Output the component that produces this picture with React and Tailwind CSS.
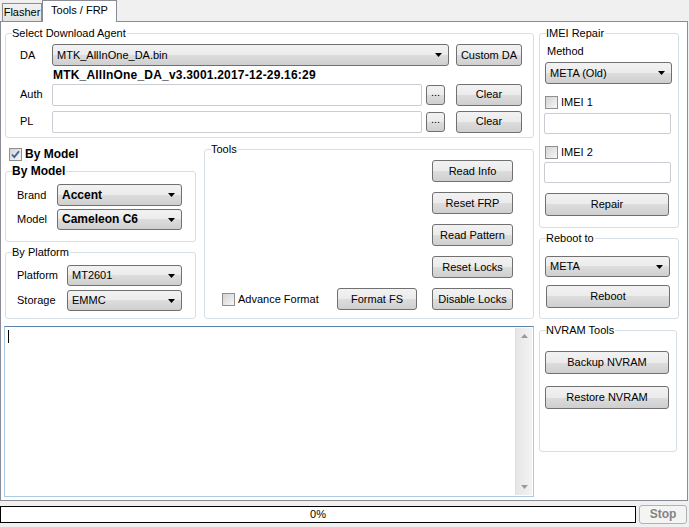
import React from 'react';

const btnFace =
  'border border-[#707070] rounded-[3px] bg-[linear-gradient(#f2f2f2,#ebebeb_50%,#dddddd_50%,#cfcfcf)]';

function Caret() {
  return (
    <svg width="7" height="4" viewBox="0 0 7 4" className="shrink-0">
      <path d="M0 0h7L3.5 4z" fill="#000" />
    </svg>
  );
}

function Button({ children, className = '' }) {
  return (
    <div className={`flex items-center justify-center ${btnFace} ${className}`}>
      {children}
    </div>
  );
}

function Combo({ value, bold, className = '' }) {
  return (
    <div className={`flex items-center justify-between pl-[4px] pr-[6px] ${btnFace} ${className}`}>
      <span className={bold ? 'font-bold text-[12px]' : ''}>{value}</span>
      <Caret />
    </div>
  );
}

function TextBox({ className = '' }) {
  return <div className={`bg-white border border-[#c9ccd3] rounded-[2px] ${className}`} />;
}

function Check({ checked, label, bold, className = '' }) {
  return (
    <div className={`flex items-center h-[13px] ${className}`}>
      <span className="w-[13px] h-[13px] border border-[#8e8f8f] bg-[linear-gradient(135deg,#d4d4d4,#f6f6f6)] flex items-center justify-center">
        {checked && (
          <svg width="9" height="9" viewBox="0 0 9 9">
            <path d="M1 4.5l2.3 2.5L8 1.2" stroke="#3b5f9a" strokeWidth="1.8" fill="none" />
          </svg>
        )}
      </span>
      <span className={`ml-[3px] ${bold ? 'font-bold text-[12px]' : ''}`}>{label}</span>
    </div>
  );
}

function Group({ title, bold, className = '', children }) {
  return (
    <div className={`relative border border-[#d5dfe5] rounded-[3px] ${className}`}>
      <span
        className={`absolute left-[6px] -top-[7px] bg-white pr-px leading-[13px] ${
          bold ? 'font-bold text-[12px]' : ''
        }`}
      >
        {title}
      </span>
      {children}
    </div>
  );
}

export default function App() {
  return (
    <div className="w-[689px] h-[527px] bg-[#f0f0f0] flex flex-col text-[11px] leading-[13px] text-black font-['Liberation_Sans',Arial,sans-serif] overflow-hidden">
      {/* tabs */}
      <div className="h-[21px] flex items-end pl-[2px]">
        <div className="h-[18px] w-[40px] border border-b-0 border-[#898c95] bg-[linear-gradient(#f2f2f2,#e3e3e3)] flex items-center justify-center">
          Flasher
        </div>
        <div className="relative z-10 -mb-px h-[22px] w-[75px] border border-b-0 border-[#898c95] bg-white flex items-center justify-center pb-[2px]">
          Tools / FRP
        </div>
      </div>

      {/* tab panel */}
      <div className="w-[688px] h-[480px] border border-[#898c95] bg-white flex">
        {/* left column */}
        <div className="ml-[3px] w-[530px] flex flex-col">
          <Group title="Select Download Agent" className="ml-px w-[529px] h-[105px] mt-[11px] pt-[10px] pl-[14px]">
            <div className="flex items-center h-[22px]">
              <span className="w-[32px]">DA</span>
              <Combo value="MTK_AllInOne_DA.bin" className="w-[397px] h-[22px]" />
              <Button className="ml-[7px] w-[66px] h-[22px]">Custom DA</Button>
            </div>
            <div className="mt-[3px] ml-[33px] h-[13px] font-bold text-[12px] tracking-[0.2px]">
              MTK_AllInOne_DA_v3.3001.2017-12-29.16:29
            </div>
            <div className="mt-[1px] flex items-center h-[23px]">
              <span className="w-[32px]">Auth</span>
              <TextBox className="w-[370px] h-[22px]" />
              <Button className="ml-[4px] w-[19px] h-[20px] pb-[4px]">...</Button>
              <Button className="ml-[11px] w-[66px] h-[22px]">Clear</Button>
            </div>
            <div className="mt-[4px] flex items-center h-[23px]">
              <span className="w-[32px]">PL</span>
              <TextBox className="w-[370px] h-[22px]" />
              <Button className="ml-[4px] w-[19px] h-[20px] pb-[4px]">...</Button>
              <Button className="ml-[11px] w-[66px] h-[22px]">Clear</Button>
            </div>
          </Group>

          <div className="flex items-start">
            <div className="ml-px w-[191px] mt-[10px] flex flex-col">
              <Check checked bold label="By Model" className="ml-[4px]" />
              <Group title="By Model" bold className="mt-[10px] h-[71px] pt-[12px] pl-[11px] flex flex-col gap-[3px]">
                <div className="flex items-center">
                  <span className="w-[40px]">Brand</span>
                  <Combo value="Accent" bold className="w-[125px] h-[22px]" />
                </div>
                <div className="flex items-center">
                  <span className="w-[40px]">Model</span>
                  <Combo value="Cameleon C6" bold className="w-[125px] h-[21px]" />
                </div>
              </Group>
              <Group title="By Platform" className="mt-[10px] h-[67px] pt-[12px] pl-[11px] flex flex-col gap-[4px]">
                <div className="flex items-center">
                  <span className="w-[50px]">Platform</span>
                  <Combo value="MT2601" className="w-[115px] h-[21px]" />
                </div>
                <div className="flex items-center">
                  <span className="w-[50px]">Storage</span>
                  <Combo value="EMMC" className="w-[115px] h-[21px]" />
                </div>
              </Group>
            </div>

            <Group title="Tools" className="ml-[8px] mt-[11px] w-[330px] h-[170px] flex pt-[10px] pr-[20px]">
              <div className="flex-1 self-end mb-[8px] flex items-center h-[22px] pl-[17px]">
                <Check label="Advance Format" className="w-[115px]" />
                <Button className="w-[80px] h-[22px]">Format FS</Button>
              </div>
              <div className="w-[81px] flex flex-col gap-[10px]">
                <Button className="h-[22px]">Read Info</Button>
                <Button className="h-[22px]">Reset FRP</Button>
                <Button className="h-[22px]">Read Pattern</Button>
                <Button className="h-[22px]">Reset Locks</Button>
                <Button className="h-[22px]">Disable Locks</Button>
              </div>
            </Group>
          </div>

          {/* log */}
          <div className="mt-[7px] w-[530px] h-[171px] border border-[#a9cae4] border-t-[#5b84a8] flex">
            <div className="flex-1 pl-[3px] pt-[3px]">
              <div className="w-px h-[13px] bg-black" />
            </div>
            <div className="w-[17px] my-px mr-px bg-[linear-gradient(90deg,#e6e6e6,#f3f3f3)] border-l border-[#e0e0e0] flex flex-col justify-between items-center py-[6px]">
              <svg width="7" height="4" viewBox="0 0 7 4">
                <path d="M0 4h7L3.5 0z" fill="#9a9a9a" />
              </svg>
              <svg width="7" height="4" viewBox="0 0 7 4">
                <path d="M0 0h7L3.5 4z" fill="#9a9a9a" />
              </svg>
            </div>
          </div>
        </div>

        {/* right column */}
        <div className="ml-[5px] w-[140px] flex flex-col">
          <Group title="IMEI Repair" className="mt-[11px] h-[195px] pt-[11px] px-[5px] flex flex-col">
            <span className="ml-[2px]">Method</span>
            <Combo value="META (Old)" className="mt-[4px] w-[127px] h-[22px]" />
            <Check label="IMEI 1" className="mt-[12px]" />
            <TextBox className="mt-[4px] -ml-px w-[127px] h-[21px]" />
            <Check label="IMEI 2" className="mt-[12px]" />
            <TextBox className="mt-[3px] -ml-px w-[127px] h-[21px]" />
            <Button className="mt-[10px] w-[124px] h-[23px]">Repair</Button>
          </Group>
          <Group title="Reboot to" className="mt-[10px] h-[81px] pt-[17px] px-[5px] flex flex-col">
            <Combo value="META" className="w-[125px] h-[21px]" />
            <Button className="mt-[8px] ml-px w-[124px] h-[23px]">Reboot</Button>
          </Group>
          <Group title="NVRAM Tools" className="mt-[11px] w-[138px] h-[122px] pt-[20px] px-[5px] flex flex-col">
            <Button className="w-[124px] h-[23px]">Backup NVRAM</Button>
            <Button className="mt-[12px] w-[124px] h-[23px]">Restore NVRAM</Button>
          </Group>
        </div>
      </div>

      {/* status */}
      <div className="mt-[4px] h-[19px] flex items-center">
        <div className="w-[636px] h-[17px] border border-black bg-white flex items-center justify-center">0%</div>
        <div className="ml-[3px] w-[48px] h-[19px] border border-[#adb2b5] rounded-[3px] bg-[#f4f4f4] text-[#838383] font-bold text-[12px] flex items-center justify-center">
          Stop
        </div>
      </div>
    </div>
  );
}
